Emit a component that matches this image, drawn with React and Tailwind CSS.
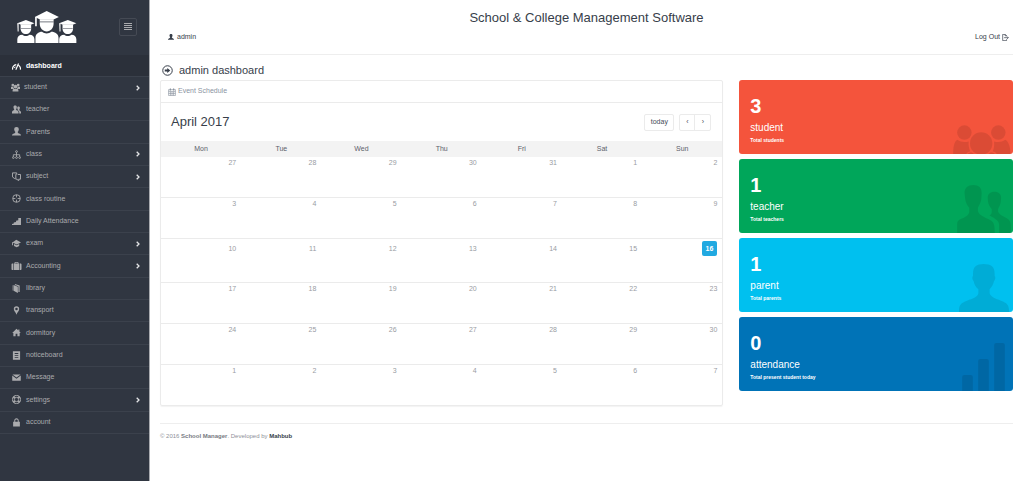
import React from "react";

const svgClass = "block h-[9px] w-[9px] shrink-0";

function Glyph({ children, className = svgClass }) {
  return (
    <svg viewBox="0 0 20 20" fill="currentColor" className={className} aria-hidden="true">
      {children}
    </svg>
  );
}

function Line({ children, className = svgClass, width = 2 }) {
  return (
    <svg viewBox="0 0 20 20" fill="none" stroke="currentColor" strokeWidth={width} className={className} aria-hidden="true">
      {children}
    </svg>
  );
}

const personPath =
  "M10 0c3.600 0 5 1.800 4.900 4.800 .6.700.4 1.700-.2 2.200-.3 1.700-1 2.700-1.900 3.500V12c.6 1.500 2.300 2 4.200 2.800 2 .8 3 1.700 3 4.200H0c0-2.500 1-3.400 3-4.200 1.900-.8 3.600-1.300 4.200-2.800v-1.500C6.300 9.700 5.600 8.700 5.300 7c-.6-.5-.8-1.500-.2-2.200C5 1.800 6.400 0 10 0z";

const icons = {
  gauge: (
    <Line width={2.6}>
      <path d="M1.500 17A9 9 0 0 1 9.500 6M14.500 7A9.500 9.500 0 0 1 18.500 17M8.500 17L14.500 3.500" />
      <path d="M4.500 13l3.500-2" strokeWidth="2" />
    </Line>
  ),
  group: (
    <Glyph>
      <circle cx="4" cy="4.500" r="3" />
      <circle cx="16" cy="4.500" r="3" />
      <circle cx="10" cy="8" r="4.200" />
      <path d="M0 8.500h5c.2 2 .8 3.200 1.800 4.200L4 13.500H0zM20 8.500h-5c-.2 2-.8 3.200-1.800 4.200l2.800.8h4zM3.500 19v-2.500c0-2.500 1.500-3.700 3.500-3.700 2 1 4 1 6 0 2 0 3.500 1.200 3.500 3.700V19z" />
    </Glyph>
  ),
  users: (
    <Glyph>
      <path d="M7 1c2.800 0 3.800 1.500 3.700 3.800-.1 2.100-.6 3.200-1.500 4.200v1.700c.4 1.600 5.400 1.900 5.400 5V19H0v-3.300c0-3.100 4.400-3.400 4.800-5V9c-.9-1-1.400-2.100-1.500-4.200C3.200 2.500 4.200 1 7 1z" />
      <path d="M14.300 3.500c2.300 0 3.200 1.200 3.100 3.100-.1 1.700-.5 2.600-1.200 3.400v1.500c.3 1.200 3.800 1.600 3.800 4.300V19h-4v-3.300c0-2.200-1.700-3.300-3.700-4.200.6-.3.700-.9.700-1.600-.8-.8-1.300-1.700-1.300-3.300 0-1.900.6-3.100 2.600-3.100z" />
    </Glyph>
  ),
  user: (
    <Glyph>
      <path d={personPath} />
    </Glyph>
  ),
  tree: (
    <Line width={1.9}>
      <path d="M10 5v10M3 15v-4.500h14V15" />
      <circle cx="10" cy="3.500" r="2" />
      <circle cx="3" cy="16.800" r="2" />
      <circle cx="10" cy="16.800" r="2" />
      <circle cx="17" cy="16.800" r="2" />
    </Line>
  ),
  switchDocs: (
    <Line width={2.2}>
      <path d="M8 15.500l-3-1.500-4-3V2h9.500V6" />
      <path d="M8.500 5v10l6.500 4v-3h4V5.500h-6" />
    </Line>
  ),
  target: (
    <Line width={2}>
      <circle cx="10" cy="10" r="8.500" />
      <path d="M10 2v5.500M10 12.500V18M2 10h5.500M12.500 10H18" />
    </Line>
  ),
  signal: (
    <Glyph>
      <path d="M0 18v-2.500l4-1V12l5-1V8.500l5-1.500V2h6v16z" />
    </Glyph>
  ),
  cap: (
    <Glyph>
      <path d="M9.500 1.500L20 7.500 10.500 12 1 7.500z" />
      <path d="M4.500 11l6 3 5.500-3v4.500l-5.500 3-6-3z" />
      <path d="M0 7h2v7H0z" />
    </Glyph>
  ),
  suitcase: (
    <Glyph className="-mx-px block h-[10px] w-[11px] shrink-0">
      <path d="M6 5V3.500C6 2.600 6.600 2 7.500 2h5c.9 0 1.500.6 1.500 1.500V5h1v13H5V5zm1.600 0h4.800V3.600H7.600zM0 7c0-1.200.8-2 2-2h1.800v13H2c-1.200 0-2-.8-2-2zM16.200 5H18c1.200 0 2 .8 2 2v9c0 1.200-.8 2-2 2h-1.800z" />
    </Glyph>
  ),
  book: (
    <Glyph>
      <path d="M3.500 2l9.500 4v14l-9.500-5z" />
      <path d="M6.500 0L17 3.500V17.500h-2.800V5L6.500 2z" />
      <path d="M1.500 2.500h1.200v12H1.500z" />
    </Glyph>
  ),
  pin: (
    <Glyph>
      <path fillRule="evenodd" d="M10 .5a6 6 0 0 1 6 6c0 4.500-4.500 7-6 13-1.500-6-6-8.500-6-13a6 6 0 0 1 6-6zm0 3.300a2.800 2.800 0 1 0 0 5.600 2.800 2.800 0 0 0 0-5.600z" />
    </Glyph>
  ),
  home: (
    <Glyph>
      <path d="M10 1.500L.5 11H3v7.500h5v-6h4v6h5V11h2.500L16.500 8V3.500H14v2z" />
    </Glyph>
  ),
  note: (
    <Glyph>
      <path fillRule="evenodd" d="M2 .5h16v19H2zM6 4.500v2h8v-2zm0 4.300v2h8v-2zm0 4.400v2h8v-2z" />
    </Glyph>
  ),
  mail: (
    <Glyph>
      <path d="M1 3.500h18l-9 6.500zM.5 5.500L10 12.500l9.500-7V17H.5z" />
    </Glyph>
  ),
  lifebuoy: (
    <Line width={2}>
      <circle cx="10" cy="10" r="9" />
      <circle cx="10" cy="10" r="4.800" />
      <path strokeWidth="4.500" d="M3.300 3.800l2.800 2.800M16.700 3.800l-2.800 2.800M3.300 16.200l2.800-2.800M16.700 16.200l-2.800-2.800" />
    </Line>
  ),
  lock: (
    <Glyph>
      <path fillRule="evenodd" d="M2.500 8.500H5V6C5 3 7 .8 10 .8S15 3 15 6v2.500h2.500V19h-15zm4.700 0h5.600V6c0-1.800-1.100-2.900-2.800-2.900S7.200 4.200 7.200 6z" />
    </Glyph>
  ),
};

const menu = [
  { label: "dashboard", icon: "gauge", row: "h-[21px] bg-[#2b303a] font-bold text-white", link: "gap-[5px] pl-3" },
  { label: "student", icon: "group", row: "h-[22px]", link: "gap-1 pl-[11px]", more: true },
  { label: "teacher", icon: "users" },
  { label: "Parents", icon: "user" },
  { label: "class", icon: "tree", more: true },
  { label: "subject", icon: "switchDocs", more: true },
  { label: "class routine", icon: "target" },
  { label: "Daily Attendance", icon: "signal" },
  { label: "exam", icon: "cap", more: true },
  { label: "Accounting", icon: "suitcase", more: true },
  { label: "library", icon: "book" },
  { label: "transport", icon: "pin" },
  { label: "dormitory", icon: "home" },
  { label: "noticeboard", icon: "note" },
  { label: "Message", icon: "mail" },
  { label: "settings", icon: "lifebuoy", more: true },
  { label: "account", icon: "lock" },
];

function SideGraduate() {
  return (
    <g>
      <path d="M0 37L26 27l26 10-11 5H11z" />
      <path d="M10 41h32v12c0 10-7 17-16 17s-16-7-16-17z" />
      <path d="M0 37h4v25H1z" />
      <path d="M0 97V86c0-9 6-14 15-14 6 5 16 5 22 0 9 0 15 5 15 14v11z" />
      <path d="M11 53h30" stroke="#303641" strokeWidth="1.500" />
    </g>
  );
}

function Logo() {
  return (
    <svg viewBox="0 0 180 97" fill="#fff" className="h-8 w-[60px]" role="img" aria-label="School Manager">
      <SideGraduate />
      <g transform="translate(127 0)">
        <SideGraduate />
      </g>
      <path d="M53 18L89 0l37 18-16 8H69z" />
      <path d="M68 25h42v14c0 13-9 23-21 23s-21-10-21-23z" />
      <path d="M54 18h5v28h-5z" />
      <path d="M55 97V82c0-12 9-19 20-19 8 7 20 7 28 0 12 0 22 7 22 19v15z" />
      <path d="M68 33h42" stroke="#303641" strokeWidth="2" />
    </svg>
  );
}

function Sidebar() {
  return (
    <aside className="w-[150px] shrink-0 border-r border-[#a9abb0] bg-[#303641] text-[#aaabae]">
      <div className="flex h-[55px] items-center justify-between pr-3 pb-[2px] pl-[17px]">
        <Logo />
        <button type="button" aria-label="Toggle menu" className="flex h-[18px] w-[18px] items-center justify-center rounded-xs border border-[#454a54]">
          <svg viewBox="0 0 8 7" className="h-[7px] w-2" fill="currentColor" aria-hidden="true">
            <path d="M0 0h8v1H0zM0 2h8v1H0zM0 4h8v1H0zM0 6h8v1H0z" />
          </svg>
        </button>
      </div>
      <nav>
        <ul className="flex h-[379px] flex-col border-b border-[#3b414c] text-[7px]">
          {menu.map((m) => (
            <li key={m.label} className={`border-t border-[#3b414c] first:border-[#2b303a] ${m.row || "flex-1"}`}>
              <a href="#" className={`flex h-full items-center pr-[9px] ${m.link || "gap-[5px] pl-3"}`}>
                {icons[m.icon]}
                <span>{m.label}</span>
                {m.more && (
                  <svg viewBox="0 0 4 6" className="ml-auto h-[6px] w-1" fill="none" stroke="#e4e5e7" strokeWidth="1.300" aria-hidden="true">
                    <path d="M.7.700L3 3 .7 5.300" />
                  </svg>
                )}
              </a>
            </li>
          ))}
        </ul>
      </nav>
    </aside>
  );
}

const days = ["Mon", "Tue", "Wed", "Thu", "Fri", "Sat", "Sun"];
const weeks = [
  [27, 28, 29, 30, 31, 1, 2],
  [3, 4, 5, 6, 7, 8, 9],
  [10, 11, 12, 13, 14, 15, 16],
  [17, 18, 19, 20, 21, 22, 23],
  [24, 25, 26, 27, 28, 29, 30],
  [1, 2, 3, 4, 5, 6, 7],
];

function Calendar() {
  return (
    <section className="col-span-2 self-start rounded-xs border border-[#ebebeb] shadow-[0_1px_1px_rgba(0,0,0,0.05)]">
      <div className="flex h-[22px] items-center gap-[2px] border-b border-[#ebebeb] pl-[7px] text-[7px] text-[#8a939f]">
        <Line className="h-2 w-2" width={1.6}>
          <path d="M1.500 4h17v15h-17zM1.500 8.500h17M1.500 13.500h17M6 8.500V19M10 8.500V19M14 8.500V19" />
          <path d="M6 1v5M14 1v5" strokeWidth="3" />
        </Line>
        <h3>Event Schedule</h3>
      </div>
      <div className="flex h-[38px] items-center justify-between pr-[11px] pl-[10px]">
        <h2 className="text-[13px] text-[#373e4a]">April 2017</h2>
        <div className="flex gap-[5px] text-[7px] text-[#464c58]">
          <button type="button" className="h-[17px] w-[30px] rounded-xs border border-[#ebebeb]">today</button>
          <div className="flex rounded-xs border border-[#ebebeb]">
            <button type="button" aria-label="Previous month" className="h-[15px] w-[15px] border-r border-[#ebebeb]">‹</button>
            <button type="button" aria-label="Next month" className="h-[15px] w-[15px]">›</button>
          </div>
        </div>
      </div>
      <table className="w-full table-fixed border-separate border-spacing-0 text-[7px] leading-[8px]">
        <thead className="bg-[#f3f3f3] text-[#5c616b]">
          <tr className="h-4">
            {days.map((d) => (
              <th key={d} scope="col" className="p-0 text-center align-middle font-normal">{d}</th>
            ))}
          </tr>
        </thead>
        <tbody className="text-right text-[#999ca3]">
          {weeks.map((week, w) => (
            <tr key={w} className={w === 2 ? "h-11" : w === 5 ? "h-10" : "h-[41px]"}>
              {week.map((n, d) => (
                <td key={d} className={`pt-[2px] pr-[5px] align-baseline ${w < 5 ? "border-b border-[#ebebeb]" : ""}`}>
                  {w === 2 && d === 6 ? (
                    <span className="inline-block rounded-xs bg-[#21a9e1] px-1 font-bold leading-[15px] text-white">{n}</span>
                  ) : (
                    n
                  )}
                </td>
              ))}
            </tr>
          ))}
        </tbody>
      </table>
    </section>
  );
}

const artClass = "absolute bottom-0 fill-black/10";

const tiles = [
  {
    count: 3,
    label: "student",
    note: "Total students",
    bg: "bg-[#f4543c]",
    art: (
      <svg viewBox="0 0 175 88" className={`${artClass} right-[2px] h-[29px] w-[58px]`} aria-hidden="true">
        <circle cx="34" cy="23" r="22" />
        <circle cx="137" cy="23" r="22" />
        <circle cx="85" cy="56" r="34" />
        <path d="M13 45C2 50 0 70 0 88h40c2-4 6-6 12-8-4-9-6-18-5-30-12 3-24 2-34-5z" />
        <path d="M158 45c11 5 16 25 16 43h-42c-2-4-6-6-12-8 4-9 5-18 4-30 12 3 24 2 34-5z" />
        <path d="M44 88c4-4 10-6 15-3 1 1 2 2 4 3zM126 88c-4-4-10-6-15-3-1 1-2 2-4 3z" />
      </svg>
    ),
  },
  {
    count: 1,
    label: "teacher",
    note: "Total teachers",
    bg: "bg-[#00a65a]",
    art: (
      <svg viewBox="0 0 160 143" className={`${artClass} right-[2px] h-12 w-[54px]`} aria-hidden="true">
        <path d="M48 0C65 0 73 8 73 24L72 42C70 56 64 62 62 68V78C66 92 84 96 98 104C110 110 112 118 112 143H0V116C0 108 4 104 14 100C28 94 36 88 36 78V68C30 62 25 52 24 42L22 24C22 8 32 0 48 0Z" />
        <path d="M111 20C124 20 131 27 131 38L130 50C129 60 124 66 122 72V80C128 92 142 94 152 102C160 108 160 116 160 143H125V118C124 106 116 102 96 90C102 88 103 84 103 78V72C98 66 93 58 92 50L91 38C91 27 98 20 111 20Z" />
      </svg>
    ),
  },
  {
    count: 1,
    label: "parent",
    note: "Total parents",
    bg: "bg-[#00c0ef]",
    art: (
      <svg viewBox="0 0 150 144" className={`${artClass} right-1 h-12 w-[50px]`} aria-hidden="true">
        <path d="M74 0C97 0 107 8 107 30V36C110 38 110 46 105 52C103 62 98 70 92 76V88C96 100 110 104 126 110C144 116 150 124 150 138V144H0V138C0 124 6 116 24 110C40 104 56 100 58 88V76C50 70 45 60 44 52C39 46 39 38 42 36V30C42 8 52 0 74 0Z" />
      </svg>
    ),
  },
  {
    count: 0,
    label: "attendance",
    note: "Total present student today",
    bg: "bg-[#0073b7]",
    art: (
      <svg viewBox="0 0 128 144" className={`${artClass} right-2 h-12 w-[43px]`} aria-hidden="true">
        <path d="M0 144v-42q0-6 6-6h20q6 0 6 6v42zM48 144V54q0-6 6-6h20q6 0 6 6v90zM96 144V6q0-6 6-6h20q6 0 6 6v138z" />
      </svg>
    ),
  },
];

function Tile({ count, label, note, bg, art }) {
  return (
    <article className={`relative h-[74px] overflow-hidden rounded-[3px] pt-4 pl-[11px] text-white ${bg}`}>
      <div className="text-[20px] leading-5 font-bold">{count}</div>
      <h3 className="mt-1 text-[10px] leading-4">{label}</h3>
      <p className="text-[5px] leading-[8px] font-bold">{note}</p>
      {art}
    </article>
  );
}

export default function App() {
  return (
    <div className="flex min-h-screen bg-white font-['Liberation_Sans',Arial,sans-serif]">
      <Sidebar />
      <div className="min-w-0 flex-1 pr-[11px] pl-[10px]">
        <header className="border-b border-[#eeeeee] pt-2 pb-2 text-[#373e4a]">
          <h1 className="text-center text-[13px] leading-5">School &amp; College Management Software</h1>
          <div className="flex h-[18px] items-center justify-between pr-1 pl-2 text-[7px]">
            <a href="#" className="flex items-center gap-[3px]">
              <Glyph className="h-[6px] w-[6px]">
                <path d={personPath} />
              </Glyph>
              admin
            </a>
            <a href="#" className="flex items-center gap-[2px]">
              Log Out
              <Line className="h-[7px] w-[7px]" width={2}>
                <path d="M13 6V5L9 1H2v18h11v-4M9 1v4h4M6 10.500h12M14.500 7l3.500 3.500-3.500 3.500" />
              </Line>
            </a>
          </div>
        </header>
        <main>
          <h2 className="flex items-center gap-[6px] pt-[5px] pl-[2px] text-[11px] leading-5 text-[#373e4a]">
            <svg viewBox="0 0 22 22" className="h-[11px] w-[11px]" aria-hidden="true">
              <circle cx="11" cy="11" r="9.500" fill="none" stroke="currentColor" strokeWidth="2" />
              <path d="M5.500 9h5V5.800L16.500 11l-6 5.200V13h-5z" fill="currentColor" />
            </svg>
            admin dashboard
          </h2>
          <div className="grid grid-cols-3 gap-4">
            <Calendar />
            <div className="flex flex-col gap-[5px]">
              {tiles.map((t) => (
                <Tile key={t.label} {...t} />
              ))}
            </div>
          </div>
        </main>
        <footer className="mt-[17px] border-t border-[#eeeeee] pt-[7px] text-[6px] leading-[10px] text-[#8d9097]">
          © 2016 <strong className="text-[#777a82]">School Manager</strong>. Developed by{" "}
          <a href="#" className="font-bold text-[#373e4a]">Mahbub</a>
        </footer>
      </div>
    </div>
  );
}
